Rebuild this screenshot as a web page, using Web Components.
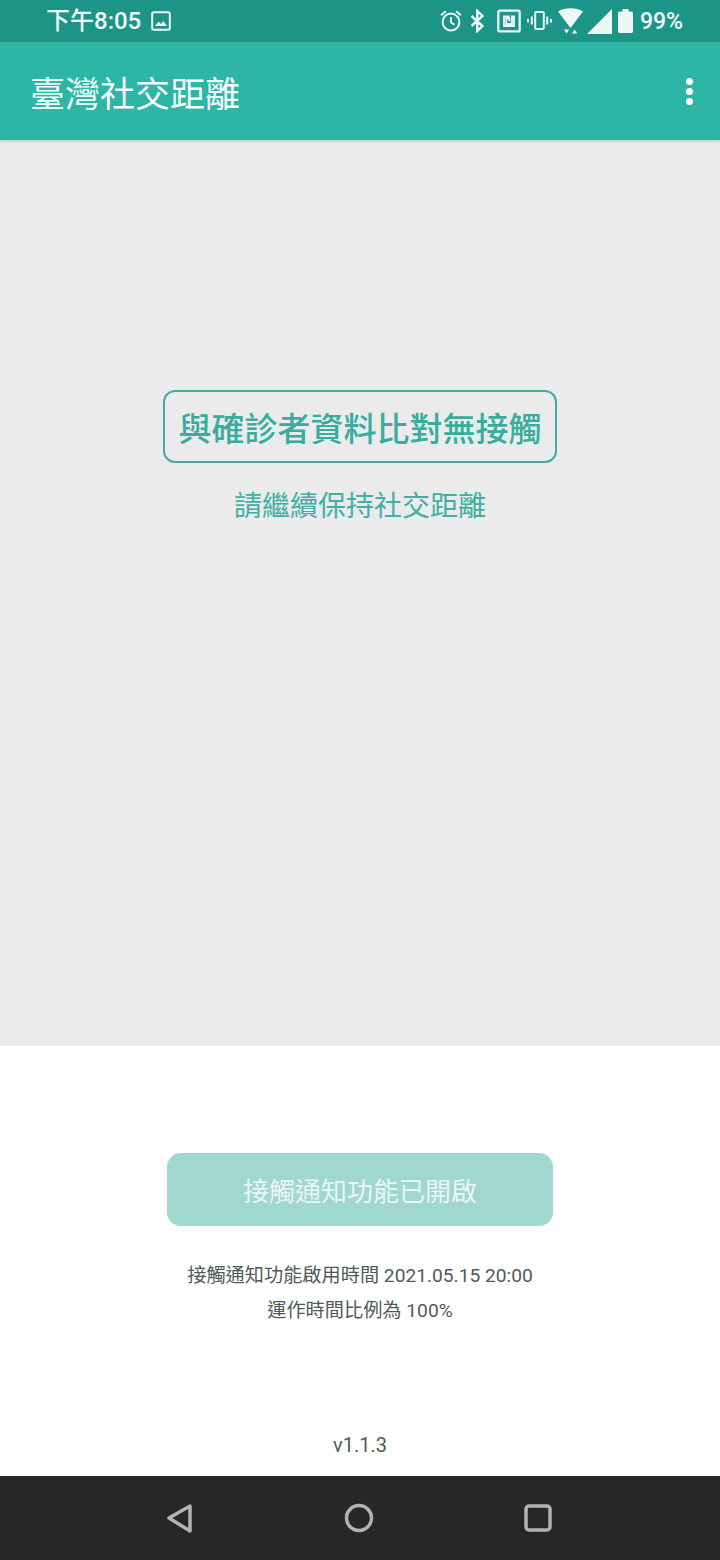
<!DOCTYPE html>
<html lang="zh-Hant">
<head>
<meta charset="utf-8">
<title>臺灣社交距離</title>
<style>
  html, body { margin: 0; padding: 0; background: #fff; }
  body { width: 720px; height: 1560px; font-family: Roboto, "Noto Sans CJK TC", sans-serif; }
  #app { display: flex; flex-direction: column; height: 1560px; overflow: hidden; }
</style>
</head>
<body>
<div id="app">
  <status-bar time="8:05" battery="99%"></status-bar>
  <app-bar>臺灣社交距離</app-bar>
  <result-panel heading="與確診者資料比對無接觸">請繼續保持社交距離</result-panel>
  <control-panel label="接觸通知功能已開啟" version="v1.1.3">
    <div>接觸通知功能啟用時間 2021.05.15 20:00</div>
    <div>運作時間比例為 100%</div>
  </control-panel>
  <nav-bar></nav-bar>
</div>

<script>
class StatusBar extends HTMLElement {
    constructor() {
        super();
        this.attachShadow({ mode: 'open' });
    }
    connectedCallback() {
        this.shadowRoot.innerHTML = `
            <style>
                :host {
                    display: flex;
                    align-items: center;
                    flex: none;
                    height: 42px;
                    box-sizing: border-box;
                    padding: 0 37px 0 46px;
                    background: #1c9588;
                    color: #eef8f6;
                    font-family: Roboto, "Noto Sans CJK TC", sans-serif;
                    font-size: 24px;
                }
                .time { font-weight: 500; line-height: 42px; letter-spacing: 0; }
                .pic { margin-left: 10px; }
                .right { margin-left: auto; display: flex; align-items: center; gap: 0; }
                svg { display: block; flex: none; }
                .pct { margin-left: 7px; font-weight: 500; font-size: 23px; }
            </style>
            <span class="time">下午${this.getAttribute('time')}</span>
            <svg class="pic" width="20" height="20" viewBox="0 0 20 20">
                <rect x="1.2" y="1.2" width="17.6" height="17.6" rx="1.5" fill="none" stroke="currentColor" stroke-width="2"/>
                <path d="M4 15l3.6-4.6 2.4 2.6 2.4-3 3.6 5z" fill="currentColor"/>
            </svg>
            <div class="right">
                <svg width="24" height="24" viewBox="0 0 24 24" fill="none" stroke="currentColor">
                    <circle cx="12" cy="13" r="8.4" stroke-width="2"/>
                    <path d="M12 8v5.5l3.6 2.2" stroke-width="1.8"/>
                    <path d="M2 6.2l4.8-4M22 6.2l-4.8-4" stroke-width="2"/>
                </svg>
                <svg style="margin-left:7px" width="15" height="24" viewBox="0 0 15 24" fill="none" stroke="currentColor" stroke-width="2.4">
                    <path d="M1.5 7l11 10-5.2 5V2l5.2 5-11 10"/>
                </svg>
                <svg style="margin-left:12px" width="24" height="24" viewBox="0 0 24 24" fill="none" stroke="currentColor">
                    <rect x="1.3" y="1.6" width="21.4" height="20.8" rx="1.5" stroke-width="2.2"/>
                    <path d="M12.5 7.5H7v9.5h10V7.5h-2v7.5H9.2V9.5h3.3v3" stroke-width="1.8"/>
                </svg>
                <svg style="margin-left:6px" width="25" height="24" viewBox="0 0 25 24" fill="none" stroke="currentColor" stroke-width="2">
                    <rect x="8.2" y="3" width="8.6" height="17" rx="1.2"/>
                    <path d="M4.8 7.5v8M20.2 7.5v8M1 10v3.5M24 10v3.5"/>
                </svg>
                <svg style="margin-left:6px" width="25" height="26" viewBox="0 0 25 26" fill="currentColor">
                    <path d="M0 3.5C7-.8 18-.8 25 3.5L12.5 20z"/>
                    <path d="M6 21.5h5.2l-2.6 4zM14 25.500l2.600-4 2.600 4z"/>
                </svg>
                <svg style="margin-left:4px" width="25" height="25" viewBox="0 0 25 25" fill="currentColor">
                    <path d="M25 0v25H0z"/>
                </svg>
                <svg style="margin-left:6px" width="15" height="24" viewBox="0 0 15 24" fill="currentColor">
                    <path d="M4.500 0h6v2.500h2.500a2 2 0 0 1 2 2V22a2 2 0 0 1-2 2H2a2 2 0 0 1-2-2V4.500a2 2 0 0 1 2-2h2.500z"/>
                </svg>
                <span class="pct">${this.getAttribute('battery')}</span>
            </div>
        `;
    }
}

class AppBar extends HTMLElement {
    constructor() {
        super();
        this.attachShadow({ mode: 'open' });
    }
    connectedCallback() {
        this.shadowRoot.innerHTML = `
            <style>
                :host {
                    display: flex;
                    align-items: center;
                    justify-content: space-between;
                    flex: none;
                    height: 98px;
                    box-sizing: border-box;
                    padding: 0 30px;
                    background: #2db5a6;
                    color: #f6fcfb;
                    font-family: "Noto Sans CJK TC", sans-serif;
                    font-size: 35px;
                    box-shadow: 0 1px 3px rgba(0, 0, 0, .2);
                    position: relative;
                    z-index: 1;
                }
                .more { display: flex; flex-direction: column; gap: 3px; margin-right: -3px; }
                .more i { display: block; width: 7px; height: 7px; border-radius: 50%; background: #fff; }
            </style>
            <slot></slot>
            <div class="more"><i></i><i></i><i></i></div>
        `;
    }
}

class ResultPanel extends HTMLElement {
    constructor() {
        super();
        this.attachShadow({ mode: 'open' });
    }
    connectedCallback() {
        this.shadowRoot.innerHTML = `
            <style>
                :host {
                    display: flex;
                    flex-direction: column;
                    align-items: center;
                    flex: none;
                    height: 906px;
                    box-sizing: border-box;
                    padding-top: 250px;
                    background: #ebebeb;
                    color: #36ad9f;
                    font-family: "Noto Sans CJK TC", sans-serif;
                }
                .box {
                    width: 394px;
                    height: 73px;
                    box-sizing: border-box;
                    border: 2px solid #45ab9f;
                    border-radius: 12px;
                    display: flex;
                    align-items: center;
                    justify-content: center;
                    font-size: 33px;
                    font-weight: 500;
                    white-space: nowrap;
                }
                .sub { margin-top: 21px; font-size: 28px; line-height: 40px; color: #3fb0a3; }
            </style>
            <div class="box">${this.getAttribute('heading')}</div>
            <div class="sub"><slot></slot></div>
        `;
    }
}

class ControlPanel extends HTMLElement {
    constructor() {
        super();
        this.attachShadow({ mode: 'open' });
    }
    connectedCallback() {
        this.shadowRoot.innerHTML = `
            <style>
                :host {
                    display: flex;
                    flex-direction: column;
                    align-items: center;
                    flex: none;
                    height: 430px;
                    box-sizing: border-box;
                    padding-top: 107px;
                    background: #fff;
                    color: #4f5b59;
                    font-family: Roboto, "Noto Sans CJK TC", sans-serif;
                    font-size: 19.200px;
                }
                .btn {
                    width: 386px;
                    height: 73px;
                    border-radius: 14px;
                    background: #a0d7d0;
                    color: #e9f6f4;
                    display: flex;
                    align-items: center;
                    justify-content: center;
                    font-size: 26px;
                }
                .info { margin-top: 32px; text-align: center; line-height: 35px; }
                .version { margin-top: auto; margin-bottom: 16px; font-size: 20px; line-height: 30px; }
            </style>
            <div class="btn">${this.getAttribute('label')}</div>
            <div class="info"><slot></slot></div>
            <div class="version">${this.getAttribute('version')}</div>
        `;
    }
}

class NavBar extends HTMLElement {
    constructor() {
        super();
        this.attachShadow({ mode: 'open' });
    }
    connectedCallback() {
        this.shadowRoot.innerHTML = `
            <style>
                :host {
                    display: flex;
                    align-items: center;
                    justify-content: space-between;
                    flex: none;
                    height: 84px;
                    box-sizing: border-box;
                    padding: 0 168px 0 166px;
                    background: #272727;
                }
                svg { display: block; }
            </style>
            <svg width="28" height="30" viewBox="0 0 28 30" fill="none" stroke="#b3b3b3" stroke-width="3.500" stroke-linejoin="round">
                <path d="M3 15L24 3v25z"/>
            </svg>
            <svg width="30" height="30" viewBox="0 0 30 30" fill="none" stroke="#b3b3b3" stroke-width="3.500">
                <circle cx="15" cy="15" r="12.500"/>
            </svg>
            <svg width="28" height="28" viewBox="0 0 28 28" fill="none" stroke="#b3b3b3" stroke-width="3.500">
                <rect x="2" y="2" width="24" height="24" rx="3"/>
            </svg>
        `;
    }
}

customElements.define('status-bar', StatusBar);
customElements.define('app-bar', AppBar);
customElements.define('result-panel', ResultPanel);
customElements.define('control-panel', ControlPanel);
customElements.define('nav-bar', NavBar);
</script>
</body>
</html>
